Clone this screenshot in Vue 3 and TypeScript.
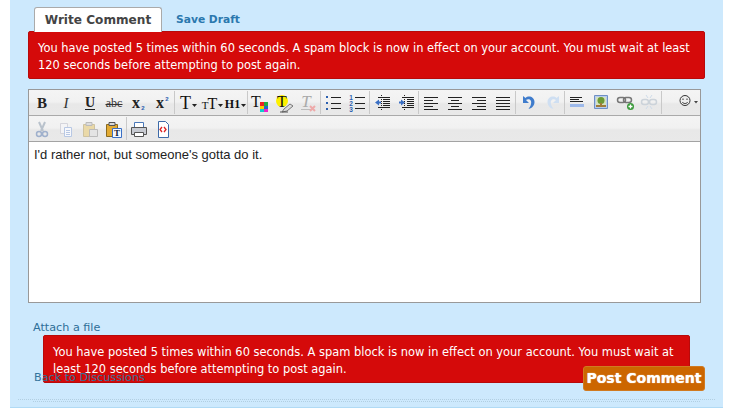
<script setup lang="ts">
const message =
  'You have posted 5 times within 60 seconds. A spam block is now in effect on your account. You must wait at least 120 seconds before attempting to post again.'
</script>

<template>
  <div class="panel">
    <div class="tabs">
      <span class="tab active">Write Comment</span>
      <span class="tab draft">Save Draft</span>
    </div>
    <div class="error">{{ message }}</div>

    <div class="editor">
      <div class="toolbar">
        <span class="b"><svg viewBox="0 0 24 24"><text x="12" y="17" class="ser" font-size="15" font-weight="700" text-anchor="middle" fill="#222">B</text></svg></span>
        <span class="b"><svg viewBox="0 0 24 24"><text x="12" y="17" class="ser" font-size="15" font-style="italic" text-anchor="middle" fill="#333">I</text></svg></span>
        <span class="b"><svg viewBox="0 0 24 24"><text x="12" y="16" class="ser" font-size="14" font-weight="700" text-anchor="middle" fill="#222">U</text><path d="M7 18.500h10" stroke="#222"/></svg></span>
        <span class="b"><svg viewBox="0 0 24 24"><text x="12" y="16" class="ser" font-size="12" text-anchor="middle" fill="#333">abc</text><path d="M3.500 13.500h17" stroke="#333"/></svg></span>
        <span class="b"><svg viewBox="0 0 24 24"><text x="10" y="17" class="ser" font-size="16" font-weight="700" text-anchor="middle" fill="#222">x</text><text x="17" y="19" class="san" font-size="6" font-weight="700" text-anchor="middle" fill="#2a5fb0">2</text></svg></span>
        <span class="b"><svg viewBox="0 0 24 24"><text x="10" y="17" class="ser" font-size="16" font-weight="700" text-anchor="middle" fill="#222">x</text><text x="17" y="10" class="san" font-size="6" font-weight="700" text-anchor="middle" fill="#2a5fb0">2</text></svg></span>
        <i class="sep"></i>
        <span class="b"><svg viewBox="0 0 24 24"><text x="10.500" y="18" class="ser" font-size="18" text-anchor="middle" fill="#111">T</text><path d="M17 13h5l-2.500 3z" fill="#222"/></svg></span>
        <span class="b"><svg viewBox="0 0 24 24"><text x="6" y="18" class="ser" font-size="11" text-anchor="middle" fill="#111">T</text><text x="13.500" y="18" class="ser" font-size="16" text-anchor="middle" fill="#111">T</text><path d="M19 13h5l-2.500 3z" fill="#222"/></svg></span>
        <span class="b"><svg viewBox="0 0 24 24"><text x="9.500" y="17" class="ser" font-size="12" font-weight="700" text-anchor="middle" fill="#111">H1</text><path d="M18 13h5l-2.500 3z" fill="#222"/></svg></span>
        <i class="sep"></i>
        <span class="b"><svg viewBox="0 0 24 24"><text x="8" y="16" class="ser" font-size="16" text-anchor="middle" fill="#111">T</text><path d="M12 11h4v4h-4z" fill="#e22"/><path d="M16 11h4v4h-4z" fill="#2a4"/><path d="M12 15h4v3h-4z" fill="#fc0"/><path d="M16 15h4v3h-4z" fill="#26c"/><path d="M12 18h4v3h-4z" fill="#1cc"/><path d="M16 18h4v3h-4z" fill="#e2c"/></svg></span>
        <span class="b"><svg viewBox="0 0 24 24"><circle cx="10" cy="10" r="6" fill="#fdf000"/><text x="10" y="16" class="ser" font-size="16" text-anchor="middle" fill="#111">T</text><path d="M10 21l2-3 6-5 3 2-6 5z" fill="#ddd" stroke="#777"/><path d="M8 21h8" stroke="#555"/></svg></span>
        <span class="b"><svg viewBox="0 0 24 24"><text x="10" y="16" class="ser" font-size="17" font-style="italic" text-anchor="middle" fill="#aaa">T</text><path d="M5 18.500h10" stroke="#bbb"/><path d="M14 15l5 5m0-5l-5 5" stroke="#eaa" stroke-width="2"/></svg></span>
        <i class="sep"></i>
        <span class="b"><svg viewBox="0 0 24 24"><path d="M5 6h2M5 12h2M5 18h2" stroke="#2a5fb0" stroke-width="2"/><path d="M10 6.500h10M10 12.500h10M10 17.500h10" stroke="#222"/></svg></span>
        <span class="b"><svg viewBox="0 0 24 24"><text x="6" y="9" class="san" font-size="6.500" font-weight="700" text-anchor="middle" fill="#2a5fb0">1</text><text x="6" y="15" class="san" font-size="6.500" font-weight="700" text-anchor="middle" fill="#2a5fb0">2</text><text x="6" y="21" class="san" font-size="6.500" font-weight="700" text-anchor="middle" fill="#2a5fb0">3</text><path d="M10 6.500h10M10 12.500h10M10 17.500h10" stroke="#222"/></svg></span>
        <i class="sep"></i>
        <span class="b"><svg viewBox="0 0 24 24"><path d="M11.500 4v16" stroke="#222" stroke-dasharray="1 1"/><path d="M13 8.500h7M13 10.500h7M13 12.500h7M13 14.500h7M8 6.500h12M8 16.500h12" stroke="#222"/><path d="M5 11.500l4-3v2h2v2h-2v2z" fill="#3a6fc4"/></svg></span>
        <span class="b"><svg viewBox="0 0 24 24"><path d="M10.500 4v16" stroke="#222" stroke-dasharray="1 1"/><path d="M13 8.500h7M13 10.500h7M13 12.500h7M13 14.500h7M8 6.500h12M8 16.500h12" stroke="#222"/><path d="M11 11.500l-4-3v2H5v2h2v2z" fill="#3a6fc4"/></svg></span>
        <i class="sep"></i>
        <span class="b"><svg viewBox="0 0 24 24"><path d="M5 6.500h14M5 9.500h9M5 12.500h14M5 15.500h9M5 18.500h14" stroke="#222"/></svg></span>
        <span class="b"><svg viewBox="0 0 24 24"><path d="M5 6.500h14M8 9.500h8M5 12.500h14M8 15.500h8M5 18.500h14" stroke="#222"/></svg></span>
        <span class="b"><svg viewBox="0 0 24 24"><path d="M5 6.500h14M10 9.500h9M5 12.500h14M10 15.500h9M5 18.500h14" stroke="#222"/></svg></span>
        <span class="b"><svg viewBox="0 0 24 24"><path d="M5 6.500h14M5 9.500h14M5 12.500h14M5 15.500h14M5 18.500h14" stroke="#222"/></svg></span>
        <i class="sep"></i>
        <span class="b"><svg viewBox="0 0 24 24"><path d="M7 5v7h6l-3-3c3-2 6 0 5 4-.4 2-1.500 3.500-2.500 5 4-1 6-4 6-7 0-5-6-7-9-4z" fill="#3f7ccc"/></svg></span>
        <span class="b"><svg viewBox="0 0 24 24"><path d="M19 5v7h-6l3-3c-3-2-6 0-5 4 .4 2 1.500 3.500 2.500 5-4-1-6-4-6-7 0-5 6-7 9-4z" fill="#cfdff2"/></svg></span>
        <i class="sep"></i>
        <span class="b"><svg viewBox="0 0 24 24"><path d="M5 6.500h12M5 8.500h9M5 10.500h13" stroke="#222"/><path d="M5 13h14v3H5z" fill="#9db9ea"/></svg></span>
        <span class="b"><svg viewBox="0 0 24 24"><path d="M5.500 4.500h13v13h-13z" fill="#b7cdee" stroke="#6f8fc4"/><path d="M7 6h10v10H7z" fill="#d5e2c0"/><circle cx="12" cy="9.500" r="3.500" fill="#6c9a35"/><path d="M11 12h2v3h-2zM7 14h10v2H7z" fill="#a07c3a"/></svg></span>
        <span class="b"><svg viewBox="0 0 24 24"><rect x="4.500" y="6.500" width="8" height="5" rx="2.500" fill="none" stroke="#777" stroke-width="1.500"/><rect x="10.500" y="6.500" width="8" height="5" rx="2.500" fill="none" stroke="#777" stroke-width="1.500"/><circle cx="17.500" cy="15.500" r="3.500" fill="#3a9a3a"/><path d="M17.500 13.500v4M15.500 15.500h4" stroke="#fff" stroke-width="1.300"/></svg></span>
        <span class="b"><svg viewBox="0 0 24 24"><rect x="4.500" y="8.500" width="7" height="5" rx="2.500" fill="none" stroke="#ccd3da" stroke-width="1.500"/><rect x="12.500" y="8.500" width="7" height="5" rx="2.500" fill="none" stroke="#ccd3da" stroke-width="1.500"/><path d="M9 4l2 3m4-3l-2 3M9 18l2-3m4 3l-2-3" stroke="#cfdcea"/></svg></span>
        <i class="sep"></i>
        <span class="smile"><svg viewBox="0 0 38 24"><circle cx="23" cy="9.500" r="5" fill="#eee" stroke="#333"/><path d="M21 7.500v1.500M25 7.500v1.500" stroke="#333"/><path d="M20.300 11c1 2 4.400 2 5.400 0" fill="none" stroke="#333"/><path d="M32 10h4l-2 2.500z" fill="#444"/></svg></span>
      </div>
      <div class="toolbar second">
        <span class="b"><svg viewBox="0 0 24 24"><path d="M9 5l4 9M15 5l-4 9" stroke="#b9c2cc" stroke-width="2"/><circle cx="9" cy="17" r="2.500" fill="none" stroke="#9fb0cc" stroke-width="1.500"/><circle cx="15" cy="17" r="2.500" fill="none" stroke="#9fb0cc" stroke-width="1.500"/></svg></span>
        <span class="b"><svg viewBox="0 0 24 24"><path d="M6.500 6.500h7v10h-7z" fill="#f4f4f6" stroke="#d5d5dc"/><path d="M10.500 10.500h7v9h-7z" fill="#f7f8fc" stroke="#b8c8e4"/><path d="M12 13.500h4M12 15.500h4M12 17.500h4" stroke="#b8c8e4"/></svg></span>
        <span class="b"><svg viewBox="0 0 24 24"><path d="M5.500 7.500h11v12h-11z" fill="#ead9a8" stroke="#cfc3a0"/><path d="M8 5.500h6v3H8z" fill="#ddd" stroke="#bbb"/><path d="M11.500 12.500h8v7h-8z" fill="#e4e4e4" stroke="#bbb"/></svg></span>
        <span class="b"><svg viewBox="0 0 24 24"><path d="M4.500 7.500h11v12h-11z" fill="#e3ab33" stroke="#8a6a20"/><path d="M7 5.500h6v3H7z" fill="#d8d8d8" stroke="#555"/><path d="M10.500 11.500h9v9h-9z" fill="#f4f8ff" stroke="#3a6fc4"/><text x="15" y="19" class="ser" font-size="9" font-weight="700" text-anchor="middle" fill="#123">T</text></svg></span>
        <i class="sep"></i>
        <span class="b"><svg viewBox="0 0 24 24"><path d="M7.500 5.500h9v6h-9z" fill="#fff" stroke="#4a78b8"/><path d="M4.500 10.500h15v7h-15z" fill="#c8cbd2" stroke="#555"/><path d="M7.500 15.500h9v4h-9z" fill="#fff" stroke="#555"/></svg></span>
        <span class="b"><svg viewBox="0 0 24 24"><path d="M7.500 4.500h7l3 3v13h-10z" fill="#fff" stroke="#3d6aa8"/><path d="M11 10l-2 2.500 2 2.500M13 10l2 2.500-2 2.500" fill="none" stroke="#d22" stroke-width="1.300"/></svg></span>
      </div>
      <div class="content">I'd rather not, but someone's gotta do it.</div>
    </div>

    <a class="attach">Attach a file</a>

    <div class="footer">
      <a class="back">Back to Discussions</a>
      <div class="error floating">{{ message }}</div>
      <span class="post">Post Comment</span>
    </div>

    <div class="dots"></div>
    <div class="dots inner"></div>
  </div>
</template>

<style scoped>
.panel {
  width: 713px;
  height: 408px;
  margin-left: 10px;
  padding-top: 7px;
  box-sizing: border-box;
  background: #cde9fd;
  border-bottom: 1px solid #b0daf5;
  font-family: "DejaVu Sans", sans-serif;
}
.tabs {
  display: flex;
  align-items: flex-start;
  margin-left: 24px;
  height: 24px;
}
.tab {
  font-weight: 700;
  white-space: nowrap;
}
.active {
  position: relative;
  z-index: 1;
  box-sizing: border-box;
  width: 128px;
  height: 25px;
  border: 1px solid #aaa;
  border-bottom: none;
  border-radius: 3px 3px 0 0;
  background: #fff;
  color: #444;
  font-size: 12.1px;
  text-align: center;
  line-height: 25px;
}
.draft {
  margin-left: 14px;
  font-size: 10.7px;
  line-height: 26px;
  color: #2b78ae;
}
.error {
  box-sizing: border-box;
  width: 677px;
  height: 48px;
  margin-left: 18px;
  padding: 8px 9px 0;
  border: 1px solid #b80a0a;
  border-radius: 2px;
  background: #d50a0a;
  color: #fff;
  font-size: 11.45px;
  line-height: 17px;
}
.editor {
  box-sizing: border-box;
  width: 673px;
  height: 214px;
  margin: 10px 0 0 18px;
  border: 1px solid #999;
  background: #fff;
  display: flex;
  flex-direction: column;
}
.toolbar {
  display: flex;
  box-sizing: border-box;
  height: 26px;
  padding-left: 1px;
  border-bottom: 1px solid #aaa;
  background: linear-gradient(#f4f4f4 0, #f1f1f1 48%, #e8e8e8 56%, #e9e9e9 100%);
}
.second {
  border-bottom-color: #a3a3a3;
}
.b {
  flex: none;
  width: 24px;
  height: 25px;
}
.b svg {
  display: block;
  width: 24px;
  height: 24px;
  margin-top: 1px;
}
.smile {
  flex: none;
}
.smile svg {
  display: block;
  width: 38px;
  height: 24px;
  margin-top: 1px;
}
.sep {
  flex: none;
  width: 1px;
  height: 23px;
  margin-top: 1px;
  background: #c9c9c9;
}
.ser {
  font-family: "Liberation Serif", serif;
}
.san {
  font-family: "Liberation Sans", sans-serif;
}
.content {
  padding: 5px;
  font-family: "Liberation Sans", sans-serif;
  font-size: 13px;
  line-height: 15px;
  color: #222;
}
.attach {
  display: block;
  margin: 18px 0 0 23px;
  font-size: 11.2px;
  line-height: 14px;
  color: #2f6f98;
}
.footer {
  position: relative;
  display: flex;
  justify-content: space-between;
  align-items: flex-start;
  box-sizing: border-box;
  width: 695px;
  height: 33px;
  margin-top: 31px;
  padding-left: 24px;
}
.floating {
  position: absolute;
  left: 33px;
  top: -31px;
  width: 647px;
  margin: 0;
}
.back {
  position: relative;
  z-index: 2;
  margin-top: 5px;
  font-size: 11.2px;
  line-height: 14px;
  color: #35749c;
}
.post {
  position: relative;
  z-index: 2;
  box-sizing: border-box;
  width: 122px;
  height: 25px;
  border: 1px solid #d07a20;
  border-radius: 3px;
  background: #cc6600;
  color: #fff;
  font-size: 14px;
  font-weight: 700;
  line-height: 23px;
  text-align: center;
  white-space: nowrap;
  text-shadow: 0 0 1px #fff;
}
.dots {
  height: 0;
  margin: 0 8px;
  border-top: 1px dotted #b2cfe2;
}
.inner {
  margin: 1px 23px 0 23px;
}
</style>

<style>
body {
  background: #fff;
}
</style>
